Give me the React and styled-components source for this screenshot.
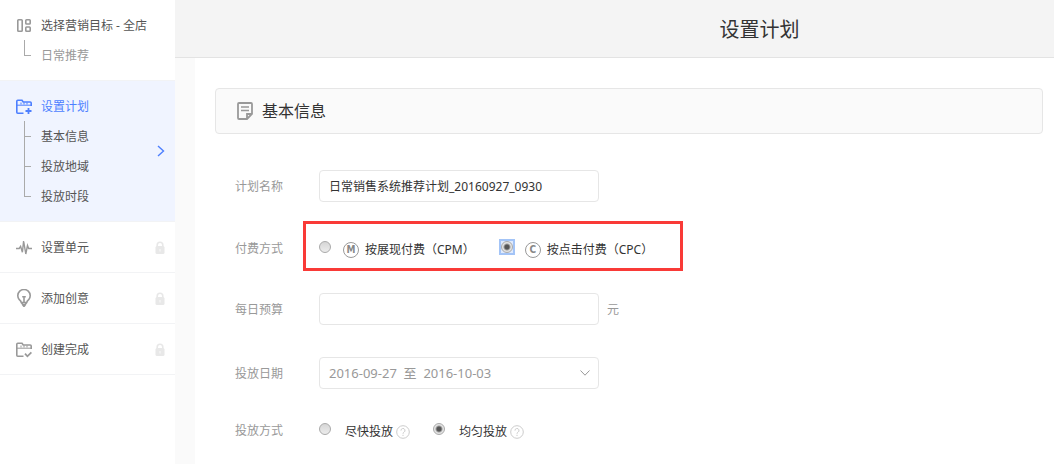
import React, { useState } from 'react';
import styled, { createGlobalStyle, css } from 'styled-components';

const steps = [
    { icon: 'target', title: '选择营销目标 - 全店', children: ['日常推荐'], muted: true },
    { icon: 'plan', title: '设置计划', children: ['基本信息', '投放地域', '投放时段'], active: true },
    { icon: 'unit', title: '设置单元', locked: true },
    { icon: 'idea', title: '添加创意', locked: true },
    { icon: 'done', title: '创建完成', locked: true },
];

const StepIcon = ({ name }) => (
    <Icon width="16" height="18" viewBox="0 0 16 18">
        {name === 'target' && (
            <>
                <rect x="1.8" y="3.8" width="4.4" height="11.4" rx="0.8" />
                <rect x="9.8" y="3.8" width="4.4" height="4.2" rx="0.8" />
                <rect x="9.8" y="11" width="4.4" height="4.2" rx="0.8" />
            </>
        )}
        {(name === 'plan' || name === 'done') && (
            <>
                <path d="M15.2 9V6q0-1-1-1H7.2L6 3.2H1.8q-1 0-1 1V15.2q0 1 1 1H7.5" />
                <path d="M1 8.2h14M5 5.5v2M8 5.5v2M11 5.5v2" strokeWidth="1" />
            </>
        )}
        {name === 'plan' && <path d="M12.5 11v6M9.5 14h6" strokeWidth="1.8" />}
        {name === 'done' && <path d="M9 13.7l2.4 2.6 4-4" strokeWidth="1.8" />}
        {name === 'unit' && <path d="M0 10.5h3.2l1.4-2.2 1.8 6L7.6 3l2.2 13 1.7-8.5 1.2 3H16" strokeWidth="1.4" />}
        {name === 'idea' && (
            <>
                <path d="M5.3 13.5Q5 12 3.3 10.7A6.2 6.2 0 1 1 12.7 10.7Q11 12 10.7 13.5zM6.5 15.5L8 17.5l1.5-2M5.5 13.8l1.2 1.7h2.6l1.2-1.7" />
                <path d="M6.2 7.8h3.6M8 7.8v5.4" />
            </>
        )}
    </Icon>
);

const Lock = () => (
    <LockIcon width="10" height="13" viewBox="0 0 10 13">
        <path d="M2.2 6V4a2.8 2.8 0 0 1 5.6 0v2" fill="none" stroke="currentColor" strokeWidth="1.6" />
        <rect x="0.5" y="5" width="9" height="8" rx="1.5" fill="currentColor" />
        <path d="M5 8v2.5" stroke="#fafafa" />
    </LockIcon>
);

const Help = () => (
    <HelpIcon width="14" height="14" viewBox="0 0 14 14">
        <circle cx="7" cy="7" r="6.3" />
        <path d="M5 5.6a2 2 0 1 1 3 1.6q-1 .6-1 1.5M7 9.8v1.2" />
    </HelpIcon>
);

const App = () => {
    const [payment, setPayment] = useState('cpc');
    const [speed, setSpeed] = useState('even');
    const [name, setName] = useState('日常销售系统推荐计划_20160927_0930');

    return (
        <>
            <GlobalStyle />
            <Page>
                <Sidebar>
                    {steps.map((step) => (
                        <Step key={step.title} $active={step.active}>
                            <StepBody>
                                <StepTitle $active={step.active}>
                                    <StepIcon name={step.icon} />
                                    <StepText>{step.title}</StepText>
                                </StepTitle>
                                {step.children && (
                                    <SubList>
                                        {step.children.map((child) => (
                                            <SubItem key={child} $muted={step.muted}>
                                                <StepText>{child}</StepText>
                                            </SubItem>
                                        ))}
                                    </SubList>
                                )}
                            </StepBody>
                            {step.locked && <Lock />}
                            {step.active && (
                                <Chevron width="8" height="12" viewBox="0 0 8 12">
                                    <path d="M1 1l5.5 5L1 11" />
                                </Chevron>
                            )}
                        </Step>
                    ))}
                </Sidebar>

                <Main>
                    <Header>
                        <h1>设置计划</h1>
                    </Header>
                    <Content>
                        <SectionTitle>
                            <svg width="16" height="18" viewBox="0 0 16 18">
                                <path d="M10 17H2q-1 0-1-1V2q0-1 1-1h12q1 0 1 1v10zM10 17v-5h5" fill="none" stroke="#999" strokeWidth="1.8" />
                                <path d="M4 5h8M4 8.5h8" stroke="#999" strokeWidth="1.6" />
                            </svg>
                            <h2>基本信息</h2>
                        </SectionTitle>

                        <Form>
                            <Row $top={36}>
                                <Label htmlFor="plan-name">计划名称</Label>
                                <Input id="plan-name" type="text" value={name} onChange={(e) => setName(e.target.value)} />
                            </Row>
                            <Row $top={19} role="radiogroup" aria-labelledby="payment">
                                <Label as="span" id="payment">付费方式</Label>
                                <Highlight>
                                    <Option>
                                        <Radio name="payment" checked={payment === 'cpm'} onChange={() => setPayment('cpm')} />
                                        <Badge>M</Badge>
                                        按展现付费（CPM）
                                    </Option>
                                    <Option>
                                        <Radio name="payment" $ring checked={payment === 'cpc'} onChange={() => setPayment('cpc')} />
                                        <Badge>C</Badge>
                                        按点击付费（CPC）
                                    </Option>
                                </Highlight>
                            </Row>
                            <Row $top={22}>
                                <Label htmlFor="budget">每日预算</Label>
                                <Input id="budget" type="text" />
                                <Unit>元</Unit>
                            </Row>
                            <Row $top={32}>
                                <Label htmlFor="dates">投放日期</Label>
                                <SelectBox>
                                    <Select id="dates">
                                        <option>2016-09-27&nbsp; 至&nbsp; 2016-10-03</option>
                                    </Select>
                                    <Arrow width="10" height="6" viewBox="0 0 10 6">
                                        <path d="M0.5 0.5L5 5.2 9.5 0.5" />
                                    </Arrow>
                                </SelectBox>
                            </Row>
                            <Row $top={26} role="radiogroup" aria-labelledby="speed">
                                <Label as="span" id="speed">投放方式</Label>
                                <Options>
                                    <Option>
                                        <Radio name="speed" checked={speed === 'fast'} onChange={() => setSpeed('fast')} />
                                        <OptionText>尽快投放</OptionText>
                                        <Help />
                                    </Option>
                                    <Option>
                                        <Radio name="speed" checked={speed === 'even'} onChange={() => setSpeed('even')} />
                                        <OptionText>均匀投放</OptionText>
                                        <Help />
                                    </Option>
                                </Options>
                            </Row>
                        </Form>
                    </Content>
                </Main>
            </Page>
        </>
    );
};

export default App;

// Styled Components
const GlobalStyle = createGlobalStyle`
  * {
    box-sizing: border-box;
  }

  body {
    margin: 0;
    background: #fff;
    color: #333;
    font: 12px/18px 'Noto Sans', 'Noto Sans CJK SC', sans-serif;
  }

  h1, h2, ul {
    margin: 0;
    padding: 0;
    font-weight: normal;
    list-style: none;
  }

  input, select {
    font: inherit;
    color: inherit;
  }
`;

const Page = styled.div`
  display: flex;
  min-height: 100vh;
`;

const Sidebar = styled.ul`
  flex: 0 0 175px;
`;

const Step = styled.li`
  display: flex;
  align-items: center;
  padding: 10px 10px 10px 16px;
  border-bottom: 1px solid #f2f3f5;
  background: ${({ $active }) => ($active ? '#f0f4ff' : '#fff')};
`;

const StepBody = styled.div`
  flex: 1;
`;

const StepTitle = styled.div`
  display: flex;
  align-items: center;
  gap: 9px;
  height: 30px;
  color: ${({ $active }) => ($active ? '#4d7fff' : '#555')};

  svg {
    color: ${({ $active }) => ($active ? '#4d7fff' : '#999')};
  }
`;

const StepText = styled.span`
  padding-top: 2px;
`;

const Icon = styled.svg`
  fill: none;
  stroke: currentColor;
  stroke-width: 1.6;
`;

const LockIcon = styled.svg`
  color: #e8e8e8;
`;

const Chevron = styled.svg`
  fill: none;
  stroke: #4d7fff;
  stroke-width: 1.4;
`;

const SubList = styled.ul`
  padding-left: 8px;
`;

const SubItem = styled.li`
  display: flex;
  align-items: center;
  gap: 10px;
  height: 30px;
  color: ${({ $muted }) => ($muted ? '#999' : '#555')};

  &::before {
    content: '';
    width: 7px;
    height: 30px;
    background:
      linear-gradient(#aaa, #aaa) 0 0 / 1px 100% no-repeat,
      linear-gradient(#aaa, #aaa) 0 15px / 7px 1px no-repeat;
  }

  &:last-child::before {
    background-size: 1px 16px, 7px 1px;
  }
`;

const Main = styled.main`
  flex: 1;
  display: flex;
  flex-direction: column;
  background: #fafafa;
`;

const Header = styled.header`
  height: 58px;
  padding-left: 290px;
  border-bottom: 1px solid #e3e3e3;
  background: #f4f4f4;
  text-align: center;

  h1 {
    font-size: 20px;
    line-height: 60px;
  }
`;

const Content = styled.section`
  flex: 1;
  margin-left: 20px;
  padding: 30px 11px 16px 20px;
  background: #fff;
`;

const SectionTitle = styled.div`
  display: flex;
  align-items: center;
  gap: 9px;
  height: 46px;
  padding-left: 21px;
  border: 1px solid #e6e6e6;
  border-radius: 4px;
  background: #fafafa;

  h2 {
    font-size: 16px;
    line-height: 24px;
  }
`;

const Form = styled.form`
  padding-left: 20px;
`;

const Row = styled.div`
  display: flex;
  align-items: baseline;
  min-height: 32px;
  margin-top: ${({ $top }) => $top}px;
`;

const Label = styled.label`
  flex: 0 0 84px;
  color: #999;
`;

const field = css`
  width: 280px;
  height: 32px;
  padding: 0 9px;
  border: 1px solid #e6e6e6;
  border-radius: 4px;
  background: #fff;
`;

const Input = styled.input`
  ${field}
`;

const Unit = styled.span`
  margin-left: 8px;
  color: #999;
`;

const SelectBox = styled.div`
  display: grid;
  align-items: center;
`;

const Select = styled.select`
  ${field}
  grid-area: 1 / 1;
  appearance: none;
  color: #999;
  font-size: 13px;
`;

const Arrow = styled.svg`
  grid-area: 1 / 1;
  justify-self: end;
  margin-right: 9px;
  fill: none;
  stroke: #999;
  pointer-events: none;
`;

const Options = styled.div`
  display: flex;
  align-items: center;
  gap: 23px;
  height: 34px;
`;

const Highlight = styled(Options)`
  gap: 26px;
  height: 50px;
  margin-left: -16px;
  padding: 8px 27px 0 13px;
  border: 3px solid #f93a37;
`;

const Option = styled.label`
  display: flex;
  align-items: center;
`;

const OptionText = styled.span`
  margin: 0 3px 0 2px;
`;

const Radio = styled.input.attrs({ type: 'radio' })`
  appearance: none;
  display: grid;
  width: 12px;
  height: 12px;
  margin: 0 12px 6px 0;
  background: ${({ $ring }) => ($ring ? '#dfeafd' : 'none')};
  outline: ${({ $ring }) => ($ring ? '2px solid #a3c4f7' : 'none')};

  &::before {
    content: '';
    border: 1px solid #aaa;
    border-radius: 50%;
    background: linear-gradient(#d6d6d6, #ececec);
  }

  &:checked::before {
    background: radial-gradient(circle, #555 0 2px, #e4e4e4 4px);
  }
`;

const Badge = styled.span`
  width: 16px;
  height: 16px;
  margin-right: 6px;
  border: 1px solid #999;
  border-radius: 50%;
  color: #888;
  font: bold 10px/14px 'Liberation Sans Narrow', 'DejaVu Sans Condensed', sans-serif;
  text-align: center;
`;

const HelpIcon = styled.svg`
  fill: none;
  stroke: #ccc;
`;
